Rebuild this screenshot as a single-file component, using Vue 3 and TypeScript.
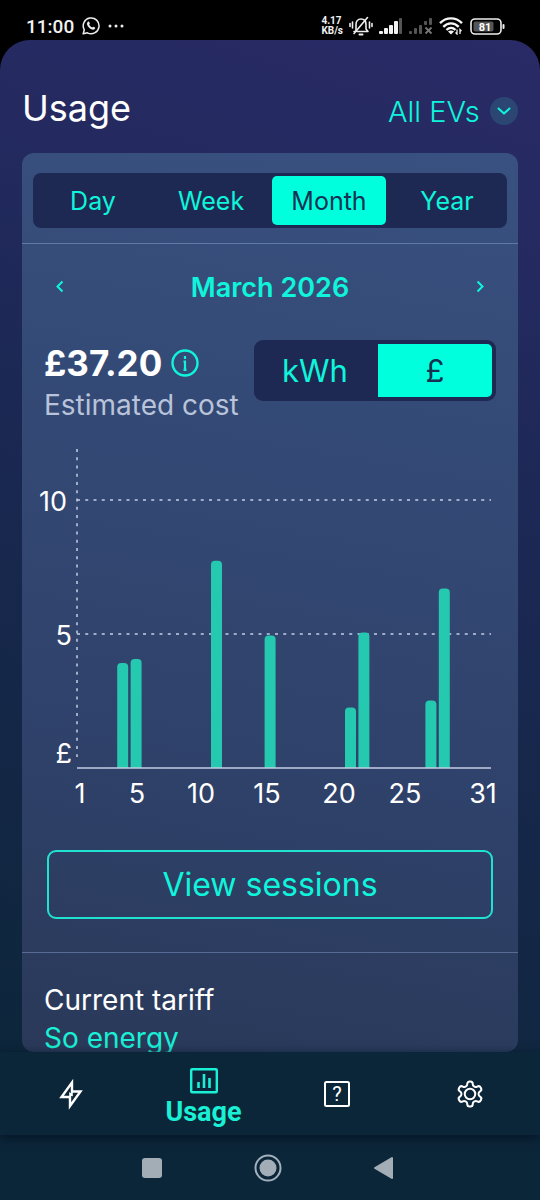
<script setup lang="ts">
import { computed, ref } from 'vue'

type Period = 'Day' | 'Week' | 'Month' | 'Year'
type Unit = 'kWh' | '£'

const periods: Period[] = ['Day', 'Week', 'Month', 'Year']
const units: Unit[] = ['kWh', '£']
const period = ref<Period>('Month')
const unit = ref<Unit>('£')
const vehicle = ref('All EVs')

interface DayCost {
  day: number
  cost: number
}

const costs: DayCost[] = [
  { day: 4, cost: 3.92 },
  { day: 5, cost: 4.07 },
  { day: 11, cost: 7.73 },
  { day: 15, cost: 4.94 },
  { day: 21, cost: 2.26 },
  { day: 22, cost: 5.06 },
  { day: 27, cost: 2.52 },
  { day: 28, cost: 6.7 },
]

const total = computed(() => '£' + costs.reduce((sum, c) => sum + c.cost, 0).toFixed(2))

// Chart geometry
const left = 55
const right = 469
const base = 328
const dayStep = 13.4
const poundStep = 26.8

const bars = computed(() =>
  costs.map(({ day, cost }) => {
    const x = left + (day - 1) * dayStep
    const top = base - cost * poundStep
    return {
      day,
      path: `M${x} ${base}V${top + 4}a4 4 0 0 1 4-4h3a4 4 0 0 1 4 4V${base}z`,
    }
  }),
)

const gridLines = [
  { label: '10', y: 60, textX: 45 },
  { label: '5', y: 194, textX: 50 },
]

const dayLabels = [
  { day: 1, x: 58 },
  { day: 5, x: 115 },
  { day: 10, x: 179 },
  { day: 15, x: 245 },
  { day: 20, x: 317 },
  { day: 25, x: 383 },
  { day: 31, x: 461 },
]
</script>

<template>
  <div class="phone">
    <div class="status">
      <div class="status-side">
        <span class="clock">11:00</span>
        <svg class="whatsapp" width="18" height="18" viewBox="0 0 18 18" aria-hidden="true">
          <path d="M1.2 16.8l1.1-4A7.9 7.9 0 1 1 5.400 15.800z" fill="none" stroke="#eee" stroke-width="1.500" stroke-linejoin="round" />
          <path d="M5.600 5c.7-.8 1.500-.6 1.800.3l.4 1.100c.1.4-.5.9-.7 1.200.7 1.400 1.700 2.400 3.200 3 .4-.4.8-1 1.200-.8l1.400.7c.5.3.3 1.300-.4 1.800-1.300.9-3.300.3-5.100-1.200C5.300 9.300 4.200 6.700 5.600 5z" fill="#eee" />
        </svg>
        <svg width="16" height="4" viewBox="0 0 16 4" aria-hidden="true">
          <circle cx="2" cy="2" r="1.500" fill="#eee" /><circle cx="8" cy="2" r="1.500" fill="#eee" /><circle cx="14" cy="2" r="1.500" fill="#eee" />
        </svg>
      </div>
      <div class="status-side status-right">
        <span class="speed">4.17<br />KB/s</span>
        <svg width="24" height="20" viewBox="0 0 24 20" fill="none" stroke="#eee" stroke-width="1.600" stroke-linecap="round" aria-hidden="true">
          <path d="M7 15V8.500C7 5 9 3 12 3s5 2 5 5.500V13l2 2.500H8M5 15.500h1" stroke-linejoin="round" />
          <path d="M10.500 18.500h3" stroke-width="2" />
          <path d="M18.500 1.500L5 17.500" />
          <path d="M3.500 6v6M1 7.500v3M20.500 6v6M23 7.500v3" />
        </svg>
        <svg width="24" height="18" viewBox="0 0 24 18" aria-hidden="true">
          <g fill="#f2f2f2"><rect y="14" width="4" height="3" rx="1" /><rect x="5" y="11" width="4" height="6" rx="1" /><rect x="10" y="8" width="4" height="9" rx="1" /><rect x="15" y="4" width="4" height="13" rx="1" /></g>
          <rect x="20" y="1" width="3" height="16" rx="1" fill="#555" />
        </svg>
        <svg width="24" height="18" viewBox="0 0 24 18" aria-hidden="true">
          <g fill="#555"><rect y="14" width="3" height="3" rx="1" /><rect x="5" y="11" width="3" height="6" rx="1" /><rect x="10" y="8" width="3" height="9" rx="1" /><rect x="15" y="4" width="3" height="4" rx="1" /><rect x="20" y="1" width="3" height="7" rx="1" /></g>
          <path d="M16.500 10.500l6 6m0-6l-6 6" stroke="#777" stroke-width="1.800" />
        </svg>
        <svg width="25" height="18" viewBox="0 0 25 18" fill="none" stroke="#f5f5f5" stroke-width="2.400" aria-hidden="true">
          <path d="M1 6.200C7.200-.2 16.800-.2 23 6.200M4.300 9.800c4.400-4.600 11-4.600 15.400 0M7.500 13c2.700-2.700 6.300-2.700 9 0" />
          <path d="M9 14.500c1.800-1.500 4.200-1.500 6 0L12 17.500z" fill="#f5f5f5" stroke="none" />
          <path d="M18 12.500v4.500l-1.500-1.500M21 17v-4.500l1.500 1.500" stroke-width="1.300" />
        </svg>
        <svg width="35" height="17" viewBox="0 0 35 17" aria-hidden="true">
          <rect x="1" y="1" width="30" height="15" rx="4" fill="none" stroke="#eee" stroke-width="1.600" />
          <rect x="3.500" y="3.500" width="20" height="10" rx="2" fill="#555" />
          <rect x="32.500" y="6" width="2" height="5" rx="1" fill="#eee" />
          <text x="15" y="12.500" text-anchor="middle" class="battery-text">81</text>
        </svg>
      </div>
    </div>

    <main class="screen">
      <header class="header">
        <h1>Usage</h1>
        <label class="vehicle">
          <select v-model="vehicle" aria-label="Vehicle">
            <option>All EVs</option>
          </select>
          <svg width="28" height="28" viewBox="0 0 28 28" aria-hidden="true">
            <circle cx="14" cy="14" r="14" fill="#2b4672" />
            <path d="M8.500 11.500l5.500 5 5.500-5" fill="none" stroke="#0ff5dc" stroke-width="2" stroke-linecap="round" stroke-linejoin="round" />
          </svg>
        </label>
      </header>

      <div class="card">
        <div class="period-bar">
          <div class="segments" role="group" aria-label="Period">
            <button v-for="p in periods" :key="p" type="button" :class="{ active: p === period }" :aria-pressed="p === period" @click="period = p">{{ p }}</button>
          </div>
        </div>

        <div class="month">
          <button type="button" aria-label="Previous month">
            <svg width="32" height="32" viewBox="0 0 32 32"><path d="M18.500 10.500l-5 5 5 5" /></svg>
          </button>
          <h2>March 2026</h2>
          <button type="button" aria-label="Next month">
            <svg width="32" height="32" viewBox="0 0 32 32"><path d="M13.500 10.500l5 5-5 5" /></svg>
          </button>
        </div>

        <div class="summary">
          <div>
            <div class="amount">
              <strong>{{ total }}</strong>
              <button type="button" aria-label="About this cost">
                <svg width="28" height="28" viewBox="0 0 28 28" aria-hidden="true">
                  <circle cx="14" cy="14" r="12.500" fill="none" stroke="#0ff5dc" stroke-width="2.400" />
                  <path d="M14 7v3M12.500 12.500H14V21M12.500 20.800h3" fill="none" stroke="#0ff5dc" stroke-width="2.200" />
                </svg>
              </button>
            </div>
            <div class="caption">Estimated cost</div>
          </div>
          <div class="units" role="group" aria-label="Unit">
            <button v-for="u in units" :key="u" type="button" :class="{ active: u === unit }" :aria-pressed="u === unit" @click="unit = u">{{ u }}</button>
          </div>
        </div>

        <svg class="chart" viewBox="0 0 496 375" role="img" aria-label="Cost per day in March 2026">
          <g class="dots">
            <line :x1="left" y1="9" :x2="left" y2="317" />
            <line v-for="g in gridLines" :key="g.label" :x1="left" :y1="g.y" :x2="right" :y2="g.y" />
          </g>
          <path v-for="b in bars" :key="b.day" :d="b.path" class="bar" />
          <line :x1="left" :y1="base" :x2="right" :y2="base" class="axis" />
          <text v-for="g in gridLines" :key="g.label" :x="g.textX" :y="g.y + 11" text-anchor="end">{{ g.label }}</text>
          <text x="50" y="323" text-anchor="end">£</text>
          <text v-for="d in dayLabels" :key="d.day" :x="d.x" y="363" text-anchor="middle">{{ d.day }}</text>
        </svg>

        <button type="button" class="sessions">View sessions</button>

        <section class="tariff">
          <h3>Current tariff</h3>
          <a href="#tariff">So energy</a>
        </section>
      </div>
    </main>

    <nav class="tabs" aria-label="Main">
      <a href="#charge" aria-label="Charge">
        <svg width="26" height="34" viewBox="0 0 26 34" fill="none" stroke="#fff" stroke-width="2.400" aria-hidden="true">
          <path d="M14 5.500L3.500 20h8.500v9L22.500 14.500H14z" />
          <path d="M12 20v-3.500l2 1.500v-3.500" stroke-width="1.600" />
        </svg>
      </a>
      <a href="#usage" class="current" aria-current="page">
        <svg width="28" height="26" viewBox="0 0 28 26" fill="none" stroke="#19f0d5" aria-hidden="true">
          <rect x="1.200" y="1.200" width="25.600" height="23" rx="1" stroke-width="2.400" />
          <path d="M8.500 14v6M14 6v14M19.500 10v10" stroke-width="2.600" />
        </svg>
        <span>Usage</span>
      </a>
      <a href="#help" aria-label="Help">
        <svg width="26" height="26" viewBox="0 0 26 26" aria-hidden="true">
          <rect x="1" y="1" width="24" height="24" rx="1.500" fill="none" stroke="#fff" stroke-width="2" />
          <text x="13" y="20" text-anchor="middle" class="help-mark">?</text>
        </svg>
      </a>
      <a href="#settings" aria-label="Settings">
        <svg width="30" height="30" viewBox="0 0 24 24" fill="none" stroke="#fff" stroke-width="1.600" stroke-linejoin="round" aria-hidden="true">
          <path d="M12.220 2h-.44a2 2 0 0 0-2 2v.18a2 2 0 0 1-1 1.730l-.43.25a2 2 0 0 1-2 0l-.15-.08a2 2 0 0 0-2.730.73l-.22.38a2 2 0 0 0 .73 2.730l.15.1a2 2 0 0 1 1 1.720v.51a2 2 0 0 1-1 1.740l-.15.09a2 2 0 0 0-.73 2.730l.22.38a2 2 0 0 0 2.730.73l.15-.08a2 2 0 0 1 2 0l.43.25a2 2 0 0 1 1 1.730V20a2 2 0 0 0 2 2h.44a2 2 0 0 0 2-2v-.18a2 2 0 0 1 1-1.730l.43-.25a2 2 0 0 1 2 0l.15.08a2 2 0 0 0 2.730-.73l.22-.39a2 2 0 0 0-.73-2.730l-.15-.08a2 2 0 0 1-1-1.740v-.5a2 2 0 0 1 1-1.740l.15-.09a2 2 0 0 0 .73-2.730l-.22-.38a2 2 0 0 0-2.730-.73l-.15.08a2 2 0 0 1-2 0l-.43-.25a2 2 0 0 1-1-1.730V4a2 2 0 0 0-2-2z" />
          <circle cx="12" cy="12" r="4.200" />
        </svg>
      </a>
    </nav>

    <div class="system">
      <button type="button" aria-label="Recent apps">
        <svg width="28" height="28" viewBox="0 0 28 28"><rect x="4" y="4" width="20" height="20" rx="3" fill="#a3adb5" /></svg>
      </button>
      <button type="button" aria-label="Home">
        <svg width="28" height="28" viewBox="0 0 28 28"><circle cx="14" cy="14" r="12.500" fill="none" stroke="#a3b1be" stroke-width="2" /><circle cx="14" cy="14" r="8.500" fill="#a3adb8" /></svg>
      </button>
      <button type="button" aria-label="Back">
        <svg width="28" height="28" viewBox="0 0 28 28"><path d="M22 4v20L5 14z" fill="#a3adb5" stroke="#a3adb5" stroke-width="2" stroke-linejoin="round" /></svg>
      </button>
    </div>
  </div>
</template>

<style>
body {
  margin: 0;
  background: #000;
}
</style>

<style scoped>
.phone {
  display: flex;
  flex-direction: column;
  height: 100vh;
  background: #000;
  color: #fff;
  font-family: Inter, 'Open Sans', sans-serif;
  font-weight: 400;
}

button {
  padding: 0;
  border: 0;
  background: none;
  color: #0ff5dc;
  font: inherit;
  cursor: pointer;
}

svg {
  display: block;
  flex: none;
}

h1,
h2,
h3 {
  margin: 0;
  font-size: inherit;
  font-weight: inherit;
}

a {
  color: #19f0d5;
  text-decoration: none;
}

.status {
  display: flex;
  justify-content: space-between;
  align-items: center;
  height: 28px;
  padding: 12px 35px 0 26px;
  font-family: Roboto, sans-serif;
  color: #f2f2f2;
}

.status-side {
  display: flex;
  align-items: center;
  gap: 8px;
}

.status-right {
  gap: 6px;
}

.clock {
  font-size: 19px;
  font-weight: 500;
}

.speed {
  font-size: 10px;
  line-height: 10px;
  font-weight: 700;
}

.battery-text {
  fill: #fff;
  font-family: Roboto, sans-serif;
  font-size: 11px;
  font-weight: 700;
}

.screen {
  display: flex;
  flex: 1;
  flex-direction: column;
  min-height: 0;
  padding: 0 22px;
  border-radius: 30px 30px 0 0;
  background: linear-gradient(198deg, #292a66 0%, #242a60 20%, #1b2853 45%, #142747 72%, #0d263b 100%);
}

.header {
  display: flex;
  justify-content: space-between;
  align-items: flex-end;
  padding: 44px 0 21px;
}

.header h1 {
  font-size: 36px;
  line-height: 48px;
}

.vehicle {
  display: flex;
  align-items: center;
  gap: 10px;
  height: 42px;
}

.vehicle select {
  appearance: none;
  padding: 0;
  border: 0;
  background: none;
  color: #0ff5dc;
  font: inherit;
  font-size: 29px;
  font-weight: 300;
}

.card {
  flex: 1;
  min-height: 0;
  overflow: hidden;
  border-radius: 12px;
  background: linear-gradient(190deg, #395180 0%, #344a76 30%, #2f426b 65%, #2a3959 100%);
}

.period-bar {
  padding: 20px 11px 15px;
  border-bottom: 1px solid #5f7aa6;
}

.segments {
  display: grid;
  grid-template-columns: repeat(4, 1fr);
  gap: 4px;
  padding: 3px;
  border-radius: 8px;
  background: #1d2952;
}

.segments button {
  height: 49px;
  border-radius: 5px;
  font-size: 25px;
}

.segments .active,
.units .active {
  background: #00ffdc;
  color: #163252;
}

.month {
  display: flex;
  justify-content: space-between;
  align-items: center;
  height: 86px;
  padding: 0 22px;
}

.month h2 {
  color: #0ff5dc;
  font-size: 27px;
  font-weight: 600;
}

.month path {
  fill: none;
  stroke: #0ff5dc;
  stroke-width: 2;
}

.summary {
  display: flex;
  justify-content: space-between;
  align-items: flex-start;
  padding: 10px 22px 16px;
}

.amount {
  display: flex;
  align-items: center;
  gap: 9px;
  font-size: 35px;
  line-height: 46px;
}

.amount strong {
  font-weight: 700;
}

.caption {
  color: #b9c3da;
  font-size: 28px;
  line-height: 38px;
}

.units {
  display: grid;
  grid-template-columns: repeat(2, 114px);
  gap: 6px;
  padding: 4px;
  border-radius: 9px;
  background: #1d2952;
}

.units button {
  height: 53px;
  border-radius: 0 5px 5px 0;
  font-size: 31px;
}

.chart {
  width: 100%;
}

.chart text {
  fill: #fff;
  font-size: 27px;
}

.dots line {
  stroke: #c5d0e8;
  stroke-width: 1.5;
  stroke-dasharray: 3 5.25;
}

.axis {
  stroke: #c5cee4;
  stroke-width: 1.5;
}

.bar {
  fill: #25c9af;
}

.sessions {
  display: block;
  width: calc(100% - 50px);
  height: 69px;
  margin: 35px 25px 33px;
  border: 2px solid #1fe3d0;
  border-radius: 9px;
  font-size: 32px;
}

.tariff {
  padding: 28px 22px;
  border-top: 1px solid #586b96;
  font-size: 28px;
  line-height: 38px;
}

.tabs {
  display: grid;
  grid-template-columns: repeat(4, 1fr);
  align-items: center;
  z-index: 1;
  height: 83px;
  padding: 0 4px;
  background: #0c2639;
  box-shadow: 0 3px 10px #051525;
}

.tabs a {
  display: flex;
  flex-direction: column;
  align-items: center;
}

.tabs .current {
  padding-top: 10px;
}

.current span {
  font-family: Roboto, sans-serif;
  font-size: 27px;
  font-weight: 700;
  line-height: 36px;
}

.help-mark {
  fill: #fff;
  font-family: Roboto, sans-serif;
  font-size: 20px;
}

.system {
  display: flex;
  justify-content: center;
  align-items: center;
  gap: 88px;
  height: 65px;
  padding-right: 4px;
  background: #0c2639;
}
</style>
